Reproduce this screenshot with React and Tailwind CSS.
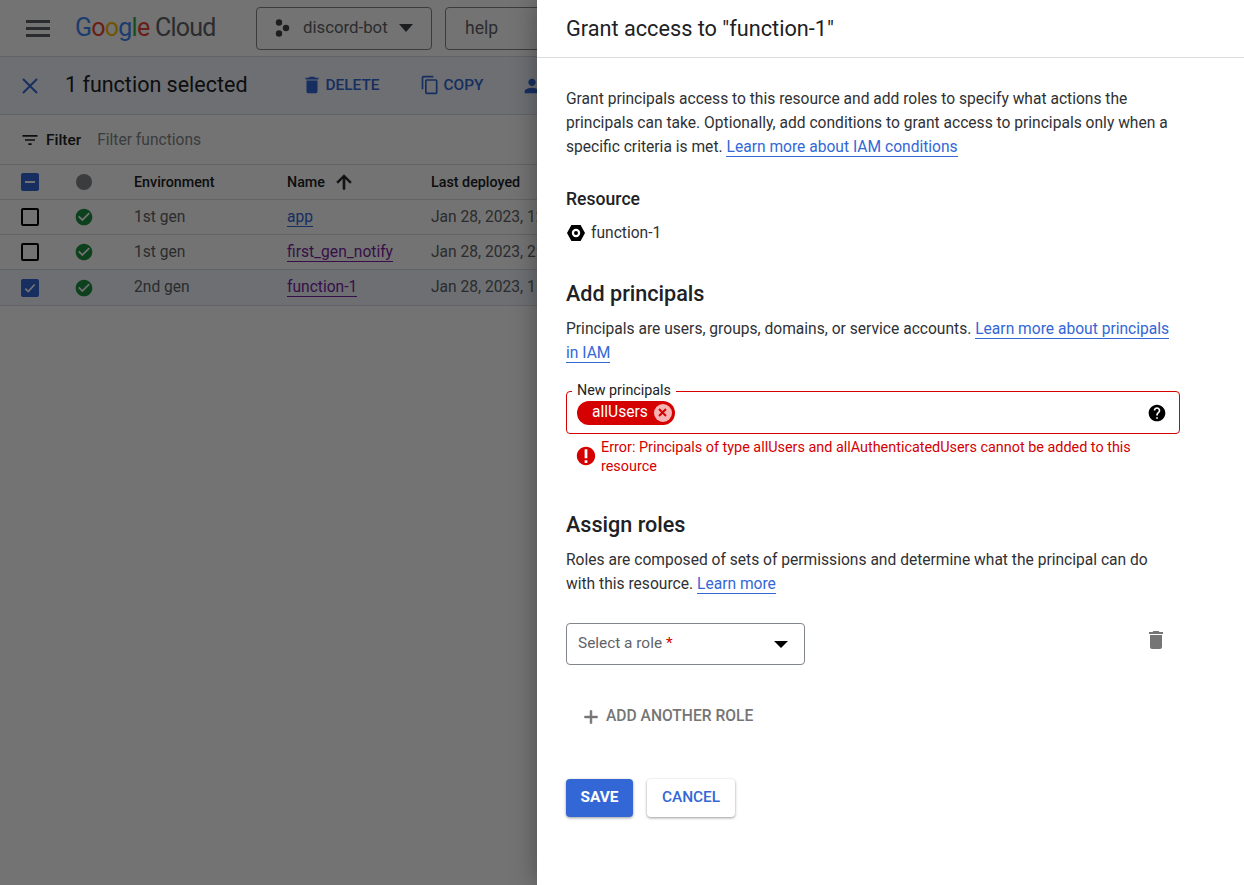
const font = { fontFamily: "Roboto, sans-serif" };

function Icon({ d, size = 24, className = "" }) {
  return (
    <svg width={size} height={size} viewBox="0 0 24 24" fill="currentColor" className={className}>
      <path d={d} />
    </svg>
  );
}

const trash = "M6 19c0 1.1.9 2 2 2h8c1.1 0 2-.9 2-2V7H6v12zM19 4h-3.5l-1-1h-5l-1 1H5v2h14V4z";
const copy = "M16 1H4c-1.1 0-2 .9-2 2v14h2V3h12V1zm3 4H8c-1.1 0-2 .9-2 2v14c0 1.1.9 2 2 2h11c1.1 0 2-.9 2-2V7c0-1.1-.9-2-2-2zm0 16H8V7h11v14z";
const checkCircle = "M12 2C6.48 2 2 6.48 2 12s4.48 10 10 10 10-4.48 10-10S17.52 2 12 2zm-2 15-5-5 1.41-1.41L10 14.17l7.59-7.59L19 8l-9 9z";
const errorIcon = "M12 2C6.48 2 2 6.48 2 12s4.48 10 10 10 10-4.48 10-10S17.52 2 12 2zm1.5 17.5h-3v-3h3v3zm0-5h-3v-10h3v10z";
const helpIcon = "M12 2C6.48 2 2 6.48 2 12s4.48 10 10 10 10-4.48 10-10S17.52 2 12 2zm1 17h-2v-2h2v2zm2.07-7.75-.9.92C13.45 12.9 13 13.5 13 15h-2v-.5c0-1.1.45-2.1 1.17-2.83l1.24-1.26c.37-.36.59-.86.59-1.41 0-1.1-.9-2-2-2s-2 .9-2 2H8c0-2.21 1.79-4 4-4s4 1.79 4 4c0 .88-.36 1.68-.93 2.25z";

function Checkbox({ state }) {
  if (state === "empty") {
    return <div className="w-[18px] h-[18px] rounded-[2px] border-2 border-black" />;
  }
  return (
    <div className="w-[18px] h-[18px] rounded-[2px] bg-[#3367d6] flex items-center justify-center">
      {state === "dash" ? (
        <div className="w-[10px] h-[2px] bg-white" />
      ) : (
        <svg width="14" height="14" viewBox="0 0 24 24" fill="none" stroke="white" strokeWidth="3">
          <path d="M4 13l5 5L20 6" />
        </svg>
      )}
    </div>
  );
}

function Row({ box, gen, name, date, linkClass, rowClass = "", h = "h-[35px]", textClass = "mb-[1px]" }) {
  return (
    <div className={`flex items-center border-b border-[#dadce0] ${h} ${rowClass}`}>
      <div className="w-[76px] pl-[21px]">
        <Checkbox state={box} />
      </div>
      <div className="w-[58px]">
        <Icon d={checkCircle} size={20} className="text-[#1e8e3e] -ml-[2px]" />
      </div>
      <div className={`w-[153px] text-[15.6px] leading-[22px] text-[#5f6368] ${textClass}`}>{gen}</div>
      <div className={`w-[144px] text-[15.6px] leading-[22px] ${textClass}`}>
        <span className={`border-b ${linkClass}`}>{name}</span>
      </div>
      <div className={`text-[15.6px] leading-[22px] text-[#5f6368] whitespace-nowrap ${textClass}`}>{date}</div>
    </div>
  );
}

function Background() {
  return (
    <div className="bg-white">
      <div className="h-[57px] flex items-center border-b border-[#dadce0]">
        <div className="ml-[26px] w-[24px] flex flex-col gap-[4px]">
          <div className="h-[3px] bg-[#5f6368]" />
          <div className="h-[3px] bg-[#5f6368]" />
          <div className="h-[3px] bg-[#5f6368]" />
        </div>
        <div className="ml-[25px] w-[181px] text-[25px] tracking-[-0.75px] whitespace-nowrap">
          <span className="text-[#4285f4]">G</span>
          <span className="text-[#ea4335]">o</span>
          <span className="text-[#fbbc04]">o</span>
          <span className="text-[#4285f4]">g</span>
          <span className="text-[#34a853]">l</span>
          <span className="text-[#ea4335]">e</span>
          <span className="text-[#5f6368]"> Cloud</span>
        </div>
        <div className="w-[176px] h-[43px] rounded-[4px] border border-[#80868b] flex items-center pl-[17px] text-[16.8px] text-[#5f6368]">
          <svg width="18" height="20" viewBox="0 0 18 20" fill="#3c4043">
            <circle cx="5" cy="4.5" r="3.2" />
            <circle cx="12" cy="10" r="3.2" />
            <circle cx="5" cy="15.5" r="3.2" />
          </svg>
          <span className="ml-[11px]">discord-bot</span>
          <svg width="14" height="8" viewBox="0 0 14 8" fill="#3c4043" className="ml-[11px]">
            <path d="M0 0h14L7 8z" />
          </svg>
        </div>
        <div className="ml-[13px] w-[300px] h-[43px] rounded-[4px] border border-[#80868b] flex items-center pl-[19px] text-[17.6px] text-[#5f6368]">
          help
        </div>
      </div>
      <div className="h-[58px] flex items-center border-b border-[#dadce0] bg-[#e8f0fe]/60">
        <svg width="24" height="24" viewBox="0 0 24 24" fill="none" stroke="#3367d6" strokeWidth="2" className="ml-[18px]">
          <path d="M5 5l14 14M19 5L5 19" />
        </svg>
        <div className="ml-[23px] text-[21.5px] text-[#202124] whitespace-nowrap">1 function selected</div>
        <div className="ml-[53px] flex items-center text-[15.4px] font-medium text-[#3367d6]">
          <Icon d={trash} size={22} />
          <span className="ml-[3px]">DELETE</span>
        </div>
        <div className="ml-[40px] flex items-center text-[15.4px] font-medium text-[#3367d6]">
          <Icon d={copy} size={20} />
          <span className="ml-[4px]">COPY</span>
        </div>
        <div className="ml-[38px] flex items-center text-[#3367d6]">
          <Icon d="M12 12c2.21 0 4-1.79 4-4s-1.79-4-4-4-4 1.79-4 4 1.79 4 4 4zm0 2c-2.67 0-8 1.34-8 4v2h16v-2c0-2.66-5.33-4-8-4z" size={22} />
        </div>
      </div>
      <div className="h-[50px] flex items-center border-b border-[#dadce0]">
        <Icon d="M10 18h4v-2h-4v2zM3 6v2h18V6H3zm3 7h12v-2H6v2z" size={20} className="ml-[20px] text-[#202124]" />
        <span className="ml-[6px] mt-[2px] text-[15.4px] font-medium text-[#202124]">Filter</span>
        <span className="ml-[16px] mt-[3px] text-[15.6px] text-[#80868b]">Filter functions</span>
      </div>
      <div className="h-[35px] flex items-center border-b border-[#dadce0]">
        <div className="w-[76px] pl-[21px]">
          <Checkbox state="dash" />
        </div>
        <div className="w-[58px]">
          <div className="w-[16px] h-[16px] rounded-full bg-[#80868b]" />
        </div>
        <div className="w-[153px] mt-[1px] text-[14.3px] font-medium text-[#202124]">Environment</div>
        <div className="w-[144px] flex items-center text-[14.3px] font-medium text-[#202124]">
          <span className="mt-[1px]">Name</span>
          <svg width="22" height="22" viewBox="0 0 24 24" fill="currentColor" stroke="currentColor" strokeWidth="0.8" className="ml-[8px]">
            <path d="M4 12l1.41 1.41L11 7.83V20h2V7.83l5.58 5.59L20 12l-8-8-8 8z" />
          </svg>
        </div>
        <div className="mt-[1px] text-[14.3px] font-medium text-[#202124] whitespace-nowrap">Last deployed</div>
      </div>
      <Row box="empty" gen="1st gen" name="app" date="Jan 28, 2023, 12:04:51 PM" linkClass="text-[#3367d6] border-[#3367d6]" />
      <Row box="empty" gen="1st gen" name="first_gen_notify" date="Jan 28, 2023, 2:04:51 PM" linkClass="text-[#7b1fa2] border-[#7b1fa2]" />
      <Row box="check" gen="2nd gen" name="function-1" date="Jan 28, 2023, 11:04:51 PM" linkClass="text-[#7b1fa2] border-[#7b1fa2]" rowClass="bg-[#e8f0fe]/60" h="h-[36px]" textClass="mb-[2px]" />
    </div>
  );
}

function TextLink({ children }) {
  return <span className="text-[#3367d6] border-b border-[#3367d6]">{children}</span>;
}

function Panel() {
  return (
    <div className="absolute top-0 right-0 bottom-0 w-[707px] bg-white shadow-[0_0_24px_rgba(0,0,0,0.35)] text-[#202124]">
      <div className="h-[58px] border-b border-[#dadce0] pl-[29px] pt-[1px] flex items-center text-[21.7px]">
        Grant access to "function-1"
      </div>
      <div className="pl-[29px] w-[643px]">
        <p className="mt-[29px] text-[15.6px] leading-[24px] text-[#2f3134]">
          Grant principals access to this resource and add roles to specify what actions the principals can take.
          Optionally, add conditions to grant access to principals only when a specific criteria is met.{" "}
          <TextLink>Learn more about IAM conditions</TextLink>
        </p>
        <div className="mt-[28px] text-[17.6px] leading-[24px] font-medium">Resource</div>
        <div className="mt-[10px] flex items-center text-[15.6px] leading-[24px] text-[#2f3134]">
          <svg width="20" height="20" viewBox="0 0 20 20">
            <path d="M5.4 2h9.2L19 10l-4.4 8H5.4L1 10z" fill="#000" />
            <circle cx="10" cy="10" r="4.2" fill="#fff" />
            <circle cx="10" cy="10" r="2" fill="#000" />
          </svg>
          <span className="ml-[5px]">function-1</span>
        </div>
        <h2 className="mt-[35px] text-[21.6px] leading-[28px] font-medium">Add principals</h2>
        <p className="mt-[9px] text-[15.6px] leading-[24px] text-[#2f3134]">
          Principals are users, groups, domains, or service accounts.{" "}
          <TextLink>Learn more about principals in IAM</TextLink>
        </p>
        <div className="relative mt-[26px] h-[43px] rounded-[4px] border border-[#d50000] flex items-center pl-[10px] pr-[12px] justify-between">
          <span className="absolute -top-[11px] left-[5px] bg-white px-[5px] text-[14.3px] leading-[18px]">
            New principals
          </span>
          <div className="h-[24px] rounded-full bg-[#d50000] text-white flex items-center pl-[15px] pr-[3px] text-[15.6px]">
            allUsers
            <div className="ml-[6px] w-[18px] h-[18px] rounded-full bg-[#f6b4b4] flex items-center justify-center">
              <svg width="9" height="9" viewBox="0 0 9 9" stroke="#d50000" strokeWidth="2">
                <path d="M1 1l7 7M8 1L1 8" />
              </svg>
            </div>
          </div>
          <Icon d={helpIcon} size={20} className="text-black" />
        </div>
        <div className="mt-[4px] flex text-[14.4px] leading-[19px] text-[#d50000]">
          <Icon d={errorIcon} size={22} className="shrink-0 mt-[7px] ml-[9px]" />
          <div className="ml-[4px]">
            Error: Principals of type allUsers and allAuthenticatedUsers cannot be added to this resource
          </div>
        </div>
        <h2 className="mt-[35px] text-[21.6px] leading-[28px] font-medium">Assign roles</h2>
        <p className="mt-[9px] text-[15.6px] leading-[24px] text-[#2f3134]">
          Roles are composed of sets of permissions and determine what the principal can do with this resource.{" "}
          <TextLink>Learn more</TextLink>
        </p>
        <div className="mt-[27px] flex justify-between items-start">
          <div className="w-[239px] h-[42px] rounded-[4px] border border-[#80868b] flex items-center justify-between pl-[11px] pr-[16px] text-[15.4px] text-[#5f6368]">
            <span>
              Select a role <span className="text-[#d50000]">*</span>
            </span>
            <svg width="14" height="7" viewBox="0 0 14 7" fill="#000">
              <path d="M0 0h14L7 7z" />
            </svg>
          </div>
          <Icon d={trash} size={24} className="text-[#757575] mt-[5px] mr-[12px]" />
        </div>
        <div className="mt-[37px] ml-[14px] flex items-center text-[15.6px] font-medium text-[#757575] h-[30px]">
          <svg width="22" height="22" viewBox="0 0 24 24" fill="currentColor" stroke="currentColor" strokeWidth="0.6">
            <path d="M19 13h-6v6h-2v-6H5v-2h6V5h2v6h6v2z" />
          </svg>
          <span className="ml-[4px]">ADD ANOTHER ROLE</span>
        </div>
        <div className="mt-[47px] flex gap-[14px]">
          <button className="w-[67px] h-[38px] rounded-[4px] bg-[#3367d6] text-white text-[15.4px] font-bold shadow-[0_1px_3px_rgba(0,0,0,0.4)]">
            SAVE
          </button>
          <button className="w-[88px] h-[38px] rounded-[4px] bg-white text-[#3367d6] text-[15.4px] font-medium shadow-[0_1px_3px_rgba(0,0,0,0.4)]">
            CANCEL
          </button>
        </div>
      </div>
    </div>
  );
}

export default function App() {
  return (
    <div className="relative h-[885px] overflow-hidden bg-white" style={font}>
      <Background />
      <div className="absolute inset-0 bg-black/[0.55]" />
      <Panel />
    </div>
  );
}
